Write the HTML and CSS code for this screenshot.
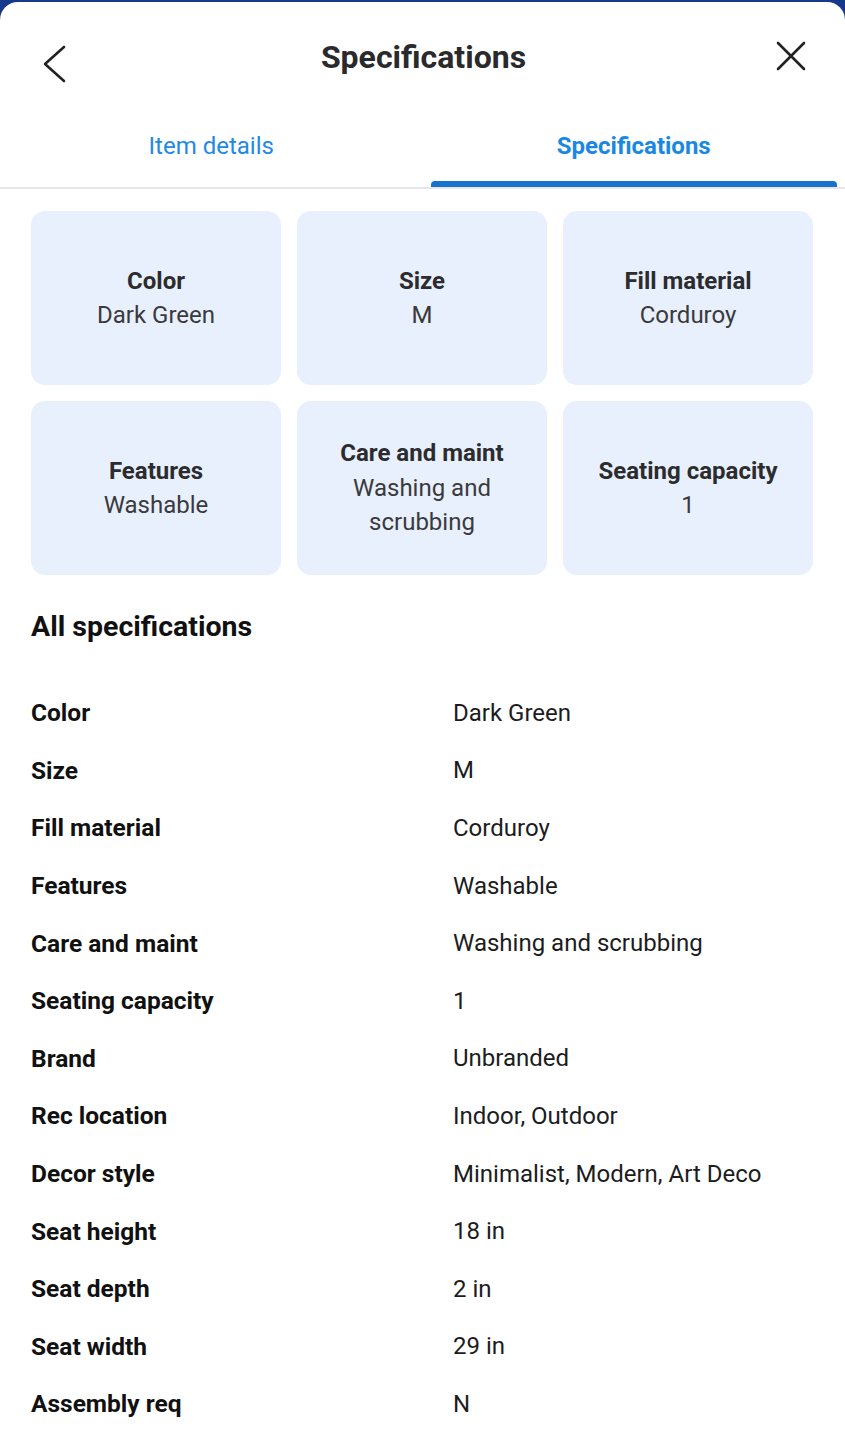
FILE: index.html
```html
<!DOCTYPE html>
<html lang="en">
<head>
<meta charset="utf-8">
<title>Specifications</title>
<link rel="stylesheet" href="styles.css">
</head>
<body>
<div class="sheet">
  <header class="header">
    <button class="icon-btn back" aria-label="Back">
      <svg width="30" height="40" viewBox="0 0 30 40"><path d="M22 4 L3 21 L22 38" fill="none" stroke="#222" stroke-width="2.6" stroke-linecap="round" stroke-linejoin="round"/></svg>
    </button>
    <h1 class="title">Specifications</h1>
    <button class="icon-btn close" aria-label="Close">
      <svg width="32" height="32" viewBox="0 0 32 32"><path d="M3 3 L29 29 M29 3 L3 29" fill="none" stroke="#222" stroke-width="2.6" stroke-linecap="round"/></svg>
    </button>
  </header>
  <nav class="tabs">
    <div class="tab">Item details</div>
    <div class="tab active">Specifications</div>
  </nav>
  <section class="cards">
    <div class="card"><div class="card-label">Color</div><div class="card-value">Dark Green</div></div>
    <div class="card"><div class="card-label">Size</div><div class="card-value">M</div></div>
    <div class="card"><div class="card-label">Fill material</div><div class="card-value">Corduroy</div></div>
    <div class="card"><div class="card-label">Features</div><div class="card-value">Washable</div></div>
    <div class="card"><div class="card-label">Care and maint</div><div class="card-value">Washing and scrubbing</div></div>
    <div class="card"><div class="card-label">Seating capacity</div><div class="card-value">1</div></div>
  </section>
  <h2 class="section-title">All specifications</h2>
  <dl class="specs">
    <div class="row"><dt>Color</dt><dd>Dark Green</dd></div>
    <div class="row"><dt>Size</dt><dd>M</dd></div>
    <div class="row"><dt>Fill material</dt><dd>Corduroy</dd></div>
    <div class="row"><dt>Features</dt><dd>Washable</dd></div>
    <div class="row"><dt>Care and maint</dt><dd>Washing and scrubbing</dd></div>
    <div class="row"><dt>Seating capacity</dt><dd>1</dd></div>
    <div class="row"><dt>Brand</dt><dd>Unbranded</dd></div>
    <div class="row"><dt>Rec location</dt><dd>Indoor, Outdoor</dd></div>
    <div class="row"><dt>Decor style</dt><dd>Minimalist, Modern, Art Deco</dd></div>
    <div class="row"><dt>Seat height</dt><dd>18 in</dd></div>
    <div class="row"><dt>Seat depth</dt><dd>2 in</dd></div>
    <div class="row"><dt>Seat width</dt><dd>29 in</dd></div>
    <div class="row"><dt>Assembly req</dt><dd>N</dd></div>
  </dl>
</div>
</body>
</html>
```
FILE: styles.css
```css
* { box-sizing: border-box; }
html, body { margin: 0; padding: 0; }
body {
  background: #17398c;
  font-family: Roboto, "Liberation Sans", sans-serif;
  color: #111;
  overflow: hidden;
}
.sheet {
  margin-top: 2px;
  background: #fff;
  border-radius: 18px 18px 0 0;
  min-height: 1440px;
}
.header {
  height: 103px;
  display: flex;
  align-items: center;
  justify-content: space-between;
  padding: 0 38px 0 42px;
}
.icon-btn {
  background: none;
  border: 0;
  padding: 0;
  display: flex;
}
.back { margin-top: 18px; }
.close { margin-top: 4px; }
.title {
  margin: 7px 0 0;
  font-size: 32px;
  font-weight: 700;
  color: #2a2a2c;
}
.tabs {
  display: grid;
  grid-template-columns: 1fr 1fr;
  border-bottom: 2px solid #e6e7ea;
  height: 84px;
}
.tab {
  display: flex;
  align-items: center;
  justify-content: center;
  font-size: 24px;
  color: #1e8ae6;
  position: relative;
}
.tab.active {
  font-weight: 700;
  color: #1a88e3;
}
.tab.active::after {
  content: "";
  position: absolute;
  left: 8px;
  right: 8px;
  bottom: 0;
  height: 6px;
  background: #1873cf;
  border-radius: 4px 4px 0 0;
}
.cards {
  display: grid;
  grid-template-columns: repeat(3, 250px);
  gap: 16px;
  padding: 22px 31px 0;
}
.card {
  height: 174px;
  background: #e8f0fd;
  border-radius: 14px;
  display: flex;
  flex-direction: column;
  align-items: center;
  justify-content: center;
  text-align: center;
  padding: 0 32px;
  font-size: 24px;
  line-height: 34.5px;
  color: #333;
}
.card-label {
  font-weight: 700;
  color: #2c2c2e;
  white-space: nowrap;
}
.card-value { color: #3a3a3c; }
.section-title {
  margin: 35px 31px 0;
  font-size: 28.5px;
  line-height: 34px;
  font-weight: 700;
  color: #111;
}
.specs {
  margin: 40px 31px 0;
  padding: 0;
}
.row {
  display: grid;
  grid-template-columns: 422px 1fr;
  height: 57.6px;
  align-items: center;
  font-size: 24px;
}
.row dt {
  font-weight: 700;
  color: #111;
  font-size: 24.5px;
}
.row dd {
  margin: 0;
  color: #1c1c1e;
}
```
